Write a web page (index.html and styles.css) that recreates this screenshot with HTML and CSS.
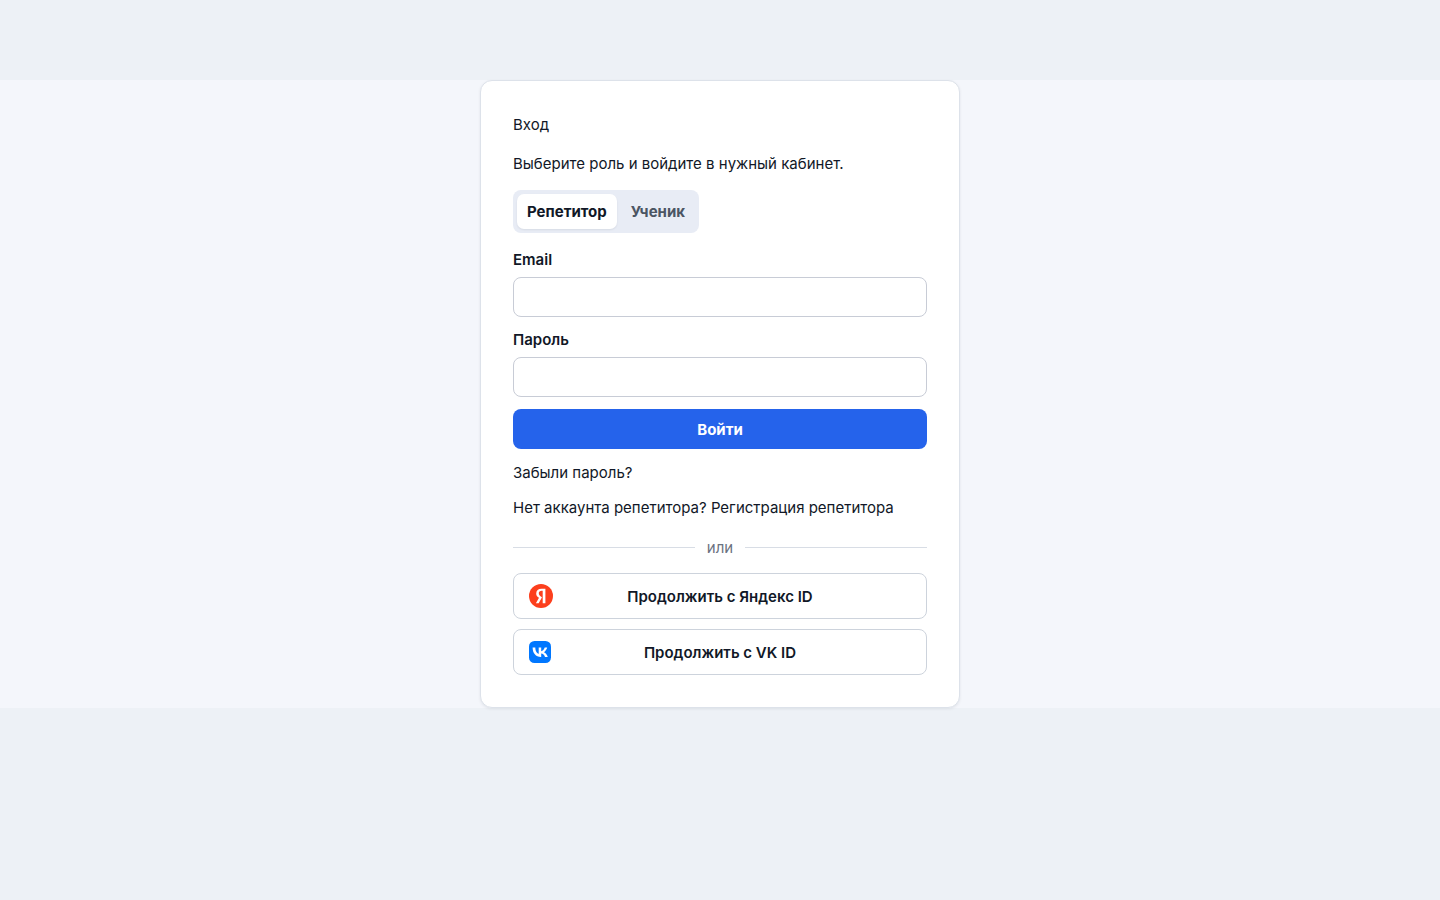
FILE: index.html
```
<!DOCTYPE html>
<html lang="ru">
<head>
    <meta charset="UTF-8">
    <meta name="viewport" content="width=device-width, initial-scale=1.0">
    <title>Вход</title>
    <link rel="stylesheet" href="styles.css">
</head>
<body>
    <main class="auth-page">
        <section class="auth-card">
            <p class="auth-title">Вход</p>
            <p class="auth-subtitle">Выберите роль и войдите в нужный кабинет.</p>

            <div class="role-switch">
                <button type="button" class="role active" aria-pressed="true">Репетитор</button>
                <button type="button" class="role" aria-pressed="false">Ученик</button>
            </div>

            <form class="auth-form">
                <div class="field">
                    <label for="email">Email</label>
                    <input type="email" id="email" name="email">
                </div>
                <div class="field">
                    <label for="password">Пароль</label>
                    <input type="password" id="password" name="password">
                </div>
                <button type="submit" class="submit-btn">Войти</button>
            </form>

            <div class="auth-links">
                <p><a href="#">Забыли пароль?</a></p>
                <p>Нет аккаунта репетитора? <a href="#">Регистрация репетитора</a></p>
            </div>

            <div class="divider"><span>или</span></div>

            <div class="social-list">
                <button type="button" class="social-btn">
                    <svg width="24" height="24" viewBox="0 0 24 24" aria-hidden="true">
                        <circle cx="12" cy="12" r="12" fill="#fc3f1d"/>
                        <path d="M13.7 6.7H12.6C10.9 6.7 9.800 7.600 9.800 9.100c0 1.600.7 2.400 2 3.300l1.200.8-3.300 6H6.900l3.100-5.400C8.200 12.700 7.200 11.400 7.200 9.400 7.200 6.500 9.200 4.700 12.600 4.700H16.400v14.500h-2.700V6.700z" fill="#fff"/>
                    </svg>
                    <span>Продолжить с Яндекс ID</span>
                </button>
                <button type="button" class="social-btn">
                    <svg width="24" height="24" viewBox="0 0 24 24" aria-hidden="true">
                        <rect x="0" y="1" width="22" height="22" rx="5.500" fill="#0077ff"/>
                        <path d="M11.900 16.900C6.700 16.900 3.700 13.400 3.600 7.600h2.700c.1 4.200 1.900 6 3.400 6.300V7.600h2.500v3.600c1.500-.2 3-1.800 3.500-3.600h2.500c-.4 2.200-2.100 3.900-3.300 4.600 1.200.5 3.100 2 3.900 4.700h-2.800c-.6-1.800-2.100-3.100-3.800-3.300v3.300h-.3z" fill="#fff"/>
                    </svg>
                    <span>Продолжить с VK ID</span>
                </button>
            </div>
        </section>
    </main>
</body>
</html>
```
FILE: styles.css
```
* {
    box-sizing: border-box;
}

body {
    margin: 0;
    padding: 80px 0;
    background-color: #edf1f6;
    color: #111827;
    font-family: Inter, "Liberation Sans", sans-serif;
    font-size: 15px;
    line-height: 23px;
}

p {
    margin: 0;
}

a {
    color: inherit;
    text-decoration: none;
}

button,
input {
    font: inherit;
    color: inherit;
}

button {
    cursor: pointer;
}

.auth-page {
    display: flex;
    justify-content: center;
    background-color: #f4f6fb;
}

.auth-card {
    width: 100%;
    max-width: 480px;
    padding: 32px;
    background-color: #fff;
    border: 1px solid #dde2ea;
    border-radius: 12px;
    box-shadow: 0 1px 3px rgba(15, 23, 42, 0.08);
}

.auth-title {
    margin-bottom: 16px;
}

.auth-subtitle {
    margin-bottom: 15px;
}

/* Role tabs */
.role-switch {
    display: inline-flex;
    gap: 4px;
    padding: 4px;
    background-color: #e8ecf5;
    border-radius: 8px;
}

.role {
    padding: 6px 10px;
    border: none;
    border-radius: 7px;
    background: none;
    color: #4b5563;
    font-weight: 700;
}

.role.active {
    background-color: #fff;
    color: #111827;
    box-shadow: 0 1px 2px rgba(15, 23, 42, 0.08);
}

/* Form */
.auth-form {
    display: flex;
    flex-direction: column;
    gap: 12px;
    margin-top: 16px;
}

.field {
    display: flex;
    flex-direction: column;
    gap: 6px;
}

.field label {
    line-height: 22px;
    font-weight: 600;
}

.field input {
    height: 40px;
    padding: 8px 12px;
    background-color: #fff;
    border: 1px solid #c8ccd6;
    border-radius: 8px;
}

.submit-btn {
    height: 40px;
    border: none;
    border-radius: 8px;
    background-color: #2563eb;
    color: #fff;
    font-weight: 700;
}

.auth-links {
    display: flex;
    flex-direction: column;
    gap: 12px;
    margin-top: 12px;
}

.divider {
    display: flex;
    align-items: center;
    gap: 12px;
    margin: 17px 0 14px;
    color: #6b7280;
}

.divider::before,
.divider::after {
    content: "";
    flex: 1;
    height: 1px;
    background-color: #d8dde5;
}

/* Social login */
.social-list {
    display: flex;
    flex-direction: column;
    gap: 10px;
}

.social-btn {
    display: grid;
    grid-template-columns: 24px 1fr 24px;
    align-items: center;
    height: 46px;
    padding: 0 15px;
    background-color: #fff;
    border: 1px solid #cdd3dc;
    border-radius: 8px;
    font-weight: 600;
}
```
